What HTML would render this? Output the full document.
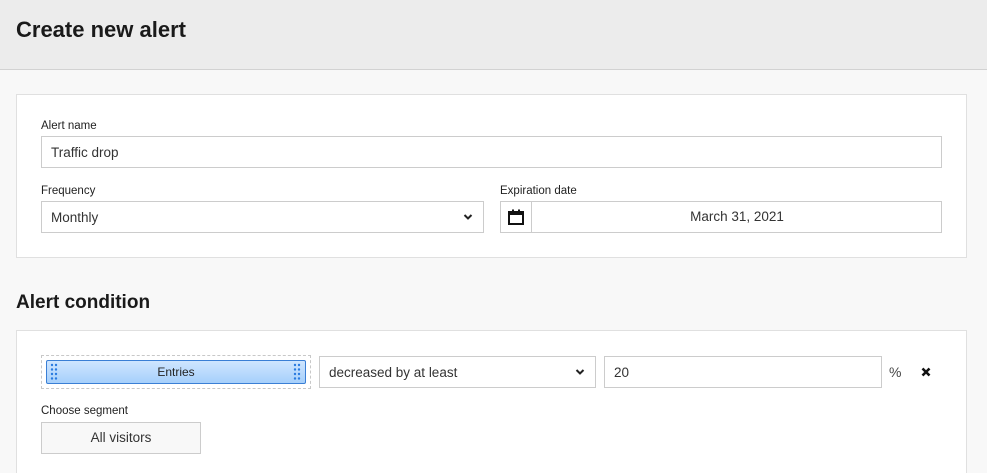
<!DOCTYPE html>
<html><head><style>
*{box-sizing:border-box;margin:0;padding:0}
html,body{width:987px;height:473px;overflow:hidden}
body{background:#f8f8f8;font-family:"Liberation Sans",sans-serif;color:#222;position:relative}
.abs{position:absolute}
.hdr{left:0;top:0;width:987px;height:70px;background:#ececec;border-bottom:1px solid #d2d2d2}
h1{position:absolute;left:16px;top:17px;font-size:22px;font-weight:bold;color:#1a1a1a}
.card{background:#fff;border:1px solid #e0e0e0}
.lbl{font-size:11.5px;color:#222}
.inp{background:#fff;border:1px solid #ccc;font-size:13.5px;color:#333;padding-left:9px;display:flex;align-items:center}
.chev{position:absolute;right:10px;top:11px}
</style></head><body>
<div class="abs hdr"><h1>Create new alert</h1></div>
<div class="abs card" style="left:16px;top:94px;width:951px;height:164px"></div>
<div class="abs lbl" style="left:41px;top:120px">Alert name</div>
<div class="abs inp" style="left:41px;top:136px;width:901px;height:32px">Traffic drop</div>
<div class="abs lbl" style="left:41px;top:185px">Frequency</div>
<div class="abs inp" style="left:41px;top:201px;width:443px;height:32px">Monthly
<svg class="chev" width="10" height="8" viewBox="0 0 10 8"><path d="M1.5 2l3.5 3.5 3.5-3.5" stroke="#222" stroke-width="2" fill="none"/></svg></div>
<div class="abs lbl" style="left:500px;top:185px">Expiration date</div>
<div class="abs inp" style="left:500px;top:201px;width:442px;height:32px;padding:0"></div>
<div class="abs" style="left:531px;top:202px;width:1px;height:30px;background:#ccc"></div>
<svg class="abs" style="left:507px;top:208px" width="18" height="18" viewBox="0 0 18 18"><rect x="2" y="4" width="14" height="12" fill="none" stroke="#111" stroke-width="2"/><rect x="2" y="4" width="14" height="3" fill="#111"/><rect x="5" y="1.5" width="2" height="4" fill="#111"/><rect x="11" y="1.5" width="2" height="4" fill="#111"/></svg>
<div class="abs" style="left:532px;top:209px;width:410px;text-align:center;font-size:13.5px;color:#333">March 31, 2021</div>
<div class="abs" style="left:16px;top:292px;font-size:19px;font-weight:bold;color:#1a1a1a">Alert condition</div>
<div class="abs card" style="left:16px;top:330px;width:951px;height:143px;border-bottom:none"></div>
<div class="abs" style="left:41px;top:355px;width:270px;height:34px;border:1px dashed #c8c8c8"></div>
<div class="abs" style="left:46px;top:360px;width:260px;height:24px;border:1px solid #3a7fd5;border-radius:2px;background:linear-gradient(#cfe6ff,#a6d0fb);text-align:center;font-size:12px;line-height:22px;color:#222">Entries</div>
<svg class="abs" style="left:50px;top:363px" width="8" height="18"><g fill="#2a7be0"><circle cx="2" cy="2" r="1.2"/><circle cx="6" cy="2" r="1.2"/><circle cx="2" cy="6.5" r="1.2"/><circle cx="6" cy="6.5" r="1.2"/><circle cx="2" cy="11" r="1.2"/><circle cx="6" cy="11" r="1.2"/><circle cx="2" cy="15.5" r="1.2"/><circle cx="6" cy="15.5" r="1.2"/></g></svg>
<svg class="abs" style="left:293px;top:363px" width="8" height="18"><g fill="#2a7be0"><circle cx="2" cy="2" r="1.2"/><circle cx="6" cy="2" r="1.2"/><circle cx="2" cy="6.5" r="1.2"/><circle cx="6" cy="6.5" r="1.2"/><circle cx="2" cy="11" r="1.2"/><circle cx="6" cy="11" r="1.2"/><circle cx="2" cy="15.5" r="1.2"/><circle cx="6" cy="15.5" r="1.2"/></g></svg>
<div class="abs inp" style="left:319px;top:356px;width:277px;height:32px">decreased by at least
<svg class="chev" width="10" height="8" viewBox="0 0 10 8"><path d="M1.5 2l3.5 3.5 3.5-3.5" stroke="#222" stroke-width="2" fill="none"/></svg></div>
<div class="abs inp" style="left:604px;top:356px;width:278px;height:32px">20</div>
<div class="abs" style="left:889px;top:364px;font-size:14px;color:#444">%</div>
<svg class="abs" style="left:921px;top:367px" width="10" height="10" viewBox="0 0 10 10"><path d="M1.5 1.5l7 7M8.5 1.5l-7 7" stroke="#111" stroke-width="2.6"/></svg>
<div class="abs lbl" style="left:41px;top:405px">Choose segment</div>
<div class="abs" style="left:41px;top:422px;width:160px;height:32px;border:1px solid #ccc;background:#f8f8f8;text-align:center;line-height:30px;font-size:13.5px;color:#333">All visitors</div>
</body></html>
